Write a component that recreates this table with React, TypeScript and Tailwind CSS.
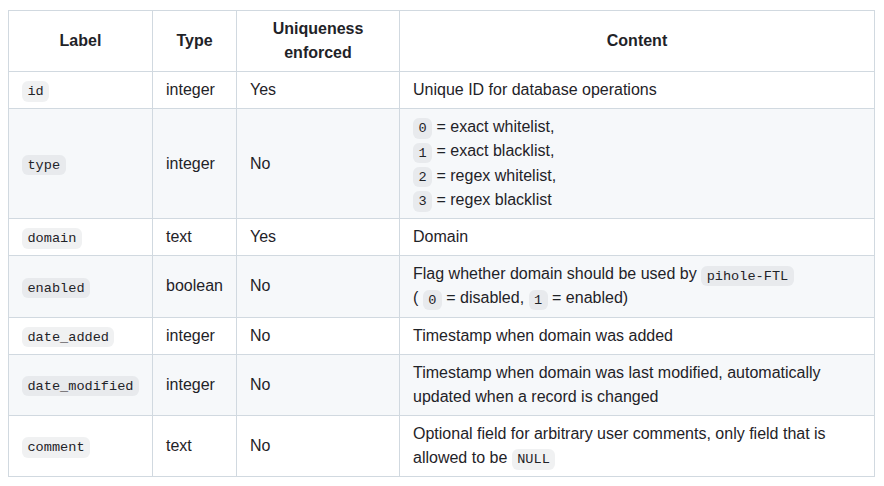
import React from "react";

const C = ({ children }: { children: React.ReactNode }) => (
  <code className="rounded-[6px] bg-[#818b981f] px-[0.4em] py-[0.2em] text-[85%] leading-[21.2px] font-['Liberation_Mono',monospace] whitespace-break-spaces">
    {children}
  </code>
);

const td = "border border-[#d1d9e0] px-[13px] py-[6px] align-middle";
const th = "border border-[#d1d9e0] px-[13px] py-[6px] font-semibold text-center align-middle";

export default function App() {
  const rows: [React.ReactNode, string, string, React.ReactNode][] = [
    [<C>id</C>, "integer", "Yes", "Unique ID for database operations"],
    [
      <C>type</C>,
      "integer",
      "No",
      <>
        <C>0</C> = exact whitelist,
        <br />
        <C>1</C> = exact blacklist,
        <br />
        <C>2</C> = regex whitelist,
        <br />
        <C>3</C> = regex blacklist
      </>,
    ],
    [<C>domain</C>, "text", "Yes", "Domain"],
    [
      <C>enabled</C>,
      "boolean",
      "No",
      <>
        Flag whether domain should be used by <C>pihole-FTL</C>
        <br />( <C>0</C> = disabled, <C>1</C> = enabled)
      </>,
    ],
    [<C>date_added</C>, "integer", "No", "Timestamp when domain was added"],
    [
      <C>date_modified</C>,
      "integer",
      "No",
      "Timestamp when domain was last modified, automatically updated when a record is changed",
    ],
    [
      <C>comment</C>,
      "text",
      "No",
      <>
        Optional field for arbitrary user comments, only field that is allowed to be <C>NULL</C>
      </>,
    ],
  ];
  return (
    <div className="min-h-[486px] bg-white pl-[8px] pt-[10px] font-['Liberation_Sans',Arial,sans-serif] text-[16px] leading-[24px] text-[#1f2328]">
      <table className="table-fixed border-collapse w-[866px]">
        <colgroup>
          <col className="w-[144px]" />
          <col className="w-[84px]" />
          <col className="w-[163px]" />
          <col className="w-[475px]" />
        </colgroup>
        <thead>
          <tr className="bg-white">
            <th className={th}>Label</th>
            <th className={th}>Type</th>
            <th className={th}>Uniqueness enforced</th>
            <th className={th}>Content</th>
          </tr>
        </thead>
        <tbody>
          {rows.map((r, i) => (
            <tr key={i} className={i % 2 === 1 ? "bg-[#f6f8fa]" : "bg-white"}>
              <td className={td}>{r[0]}</td>
              <td className={td}>{r[1]}</td>
              <td className={td}>{r[2]}</td>
              <td className={td}>{r[3]}</td>
            </tr>
          ))}
        </tbody>
      </table>
    </div>
  );
}
